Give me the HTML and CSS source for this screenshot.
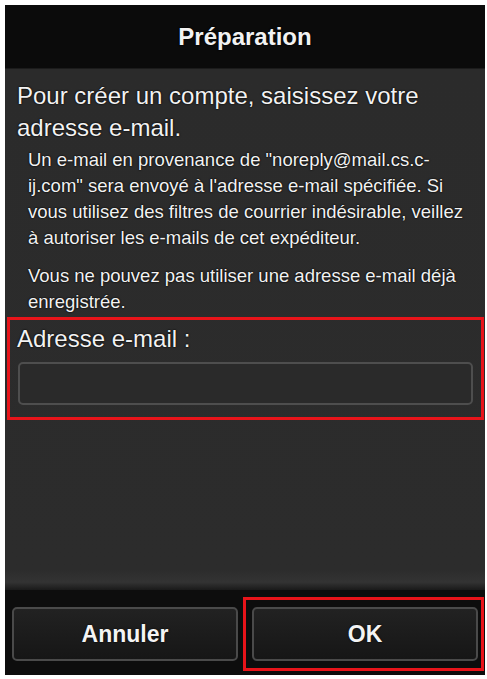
FILE: index.html
```html
<!DOCTYPE html>
<html lang="fr">
<head>
<meta charset="utf-8">
<title>Préparation</title>
<link rel="stylesheet" href="styles.css">
</head>
<body>
<div class="screen">
  <div class="header">Préparation</div>
  <div class="content">
    <p class="lead">Pour créer un compte, saisissez votre adresse e-mail.</p>
    <div class="info">
      <p>Un e-mail en provenance de "noreply@mail.cs.c-ij.com" sera envoyé à l'adresse e-mail spécifiée. Si vous utilisez des filtres de courrier indésirable, veillez à autoriser les e-mails de cet expéditeur.</p>
      <p>Vous ne pouvez pas utiliser une adresse e-mail déjà enregistrée.</p>
    </div>
    <div class="field">
      <label class="field-label" for="email">Adresse e-mail :</label>
      <input class="field-input" id="email" type="text">
      <span class="highlight highlight-field"></span>
    </div>
  </div>
  <div class="footer">
    <button class="btn" type="button">Annuler</button>
    <button class="btn btn-ok" type="button">OK<span class="highlight highlight-ok"></span></button>
  </div>
</div>
</body>
</html>
```

FILE: styles.css
```css
html, body {
  margin: 0;
  padding: 0;
  background: #ffffff;
}

body {
  font-family: "Liberation Sans", Arial, sans-serif;
  color: #f2f2f2;
}

.screen {
  margin: 5px 0 0 5px;
  width: 480px;
  height: 670px;
  display: flex;
  flex-direction: column;
  background: #2b2b2b;
}

.header {
  height: 64px;
  flex: none;
  display: flex;
  align-items: center;
  justify-content: center;
  background: #0b0b0b;
  font-size: 24px;
  font-weight: bold;
  text-shadow: 0 0 2px #000, 0 0 1px #000;
  border-bottom: 1px solid #1c1c1c;
  box-sizing: border-box;
}

.content {
  flex: 1;
  padding: 11px 0 0 12px;
  background: linear-gradient(to bottom, #2b2b2b 0%, #2c2c2c 96%, #333333 98.5%, #1a1a1a 100%);
}

.lead {
  margin: 0;
  font-size: 24px;
  line-height: 32px;
  padding-right: 12px;
  text-shadow: 0 0 2px #000, 0 0 1px #000;
}

.info {
  padding: 3px 15px 0 11px;
  display: flex;
  flex-direction: column;
  gap: 12px;
}

.info p {
  margin: 0;
  font-size: 18.5px;
  line-height: 26px;
  text-shadow: 0 0 2px #000, 0 0 1px #000;
}

.field {
  position: relative;
  margin-top: 7px;
  width: 456px;
}

.field-label {
  display: block;
  padding-top: 3px;
  font-size: 24px;
  line-height: 28px;
  text-shadow: 0 0 2px #000, 0 0 1px #000;
}

.field-input {
  display: block;
  margin: 9px 0 0 1px;
  width: 455px;
  height: 43px;
  box-sizing: border-box;
  border: 2px solid #4e4e4e;
  border-radius: 5px;
  background: #2a2a2a;
  outline: none;
}

.highlight {
  position: absolute;
  border: 3px solid #e8141a;
  box-sizing: border-box;
  pointer-events: none;
}

.highlight-field {
  left: -10px;
  right: -11px;
  top: -5px;
  bottom: -15px;
}

.footer {
  height: 85px;
  flex: none;
  box-sizing: border-box;
  display: flex;
  gap: 14px;
  padding: 17px 7px 14px;
  background: #0d0d0d;
}

.btn {
  position: relative;
  flex: 1;
  height: 54px;
  border: 2px solid #4a4a4a;
  border-radius: 5px;
  background: linear-gradient(to bottom, #222222, #161616);
  color: #f4f4f4;
  font-family: "Liberation Sans", Arial, sans-serif;
  font-size: 23px;
  font-weight: bold;
  text-shadow: 0 0 2px #000;
  padding: 0;
}

.highlight-ok {
  left: -11px;
  right: -8px;
  top: -12px;
  bottom: -12px;
}
```
